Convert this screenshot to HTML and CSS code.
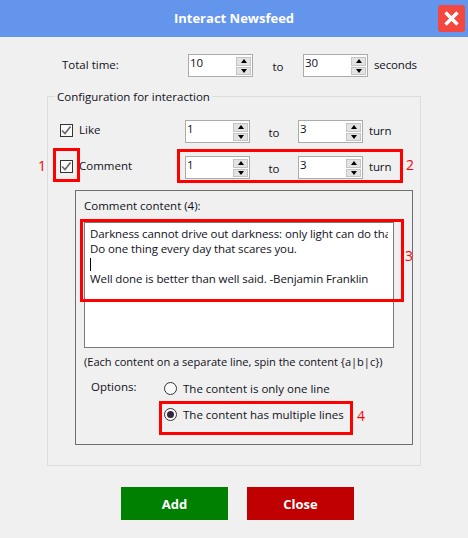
FILE: index.html
```html
<!DOCTYPE html>
<html lang="en">
<head>
<meta charset="utf-8">
<title>Interact Newsfeed</title>
<link rel="stylesheet" href="styles.css">
</head>
<body>
<div class="app">
  <header class="titlebar">
    <h1 class="title">Interact Newsfeed</h1>
    <button class="close-x" aria-label="Close">
      <svg width="17" height="17" viewBox="0 0 17 17"><path d="M2.5 2.5L14.5 14.5M14.5 2.5L2.5 14.5" stroke="#fff" stroke-width="3.4" fill="none"/></svg>
    </button>
  </header>

  <div class="total-row">
    <span class="total-label">Total time:</span>
    <div class="spin"><span class="spin-val">10</span><span class="spin-btns"><i class="up"></i><i class="down"></i></span></div>
    <span class="to to-total">to</span>
    <div class="spin"><span class="spin-val">30</span><span class="spin-btns"><i class="up"></i><i class="down"></i></span></div>
    <span class="unit">seconds</span>
  </div>

  <fieldset class="config">
    <legend class="config-legend">Configuration for interaction</legend>

    <div class="opt-row like-row">
      <span class="check"><svg width="11" height="11" viewBox="0 0 11 11"><path d="M1 5.5L4 8.5L9.5 1.5" stroke="#666" stroke-width="1.6" fill="none"/></svg></span>
      <span class="opt-label">Like</span>
      <div class="spin"><span class="spin-val">1</span><span class="spin-btns"><i class="up"></i><i class="down"></i></span></div>
      <span class="to">to</span>
      <div class="spin"><span class="spin-val">3</span><span class="spin-btns"><i class="up"></i><i class="down"></i></span></div>
      <span class="unit">turn</span>
    </div>

    <div class="opt-row comment-row">
      <span class="check"><svg width="11" height="11" viewBox="0 0 11 11"><path d="M1 5.5L4 8.5L9.5 1.5" stroke="#666" stroke-width="1.6" fill="none"/></svg></span>
      <span class="opt-label">Comment</span>
      <div class="spin"><span class="spin-val">1</span><span class="spin-btns"><i class="up"></i><i class="down"></i></span></div>
      <span class="to">to</span>
      <div class="spin"><span class="spin-val">3</span><span class="spin-btns"><i class="up"></i><i class="down"></i></span></div>
      <span class="unit">turn</span>
    </div>

    <section class="comment-box">
      <div class="comment-title">Comment content (4):</div>
      <div class="editor">
        <div class="line">Darkness cannot drive out darkness: only light can do that; hate cannot drive out hate</div>
        <div class="line">Do one thing every day that scares you.</div>
        <div class="line"><span class="caret"></span></div>
        <div class="line">Well done is better than well said. -Benjamin Franklin</div>
      </div>
      <div class="hint">(Each content on a separate line, spin the content {a|b|c})</div>
      <div class="options">
        <span class="options-label">Options:</span>
        <div class="radios">
          <div class="radio-row"><span class="radio"></span><span>The content is only one line</span></div>
          <div class="radio-row"><span class="radio on"></span><span>The content has multiple lines</span></div>
        </div>
      </div>
    </section>
  </fieldset>

  <footer class="actions">
    <button class="btn btn-add">Add</button>
    <button class="btn btn-close">Close</button>
  </footer>

  <div class="mark mark-1"></div>
  <div class="mark mark-2"></div>
  <div class="mark mark-3"></div>
  <div class="mark mark-4"></div>
  <span class="num num-1">1</span>
  <span class="num num-2">2</span>
  <span class="num num-3">3</span>
  <span class="num num-4">4</span>
</div>
</body>
</html>
```
FILE: styles.css
```css
* { box-sizing: border-box; }
html, body { margin: 0; padding: 0; }
body { width: 468px; height: 538px; overflow: hidden; }

.app {
  position: relative;
  width: 468px;
  height: 538px;
  background: #f0f0f0;
  font-family: "Open Sans", "Noto Sans", sans-serif;
  font-size: 11.5px;
  line-height: 15px;
  color: #10101a;
}

.titlebar {
  position: relative;
  height: 37px;
  background: #6495ed;
  display: flex;
  align-items: center;
  justify-content: center;
}
.title {
  margin: 0;
  font-size: 13px;
  font-weight: 700;
  color: #fff;
}
.close-x {
  position: absolute;
  left: 438px;
  top: 5px;
  width: 27px;
  height: 27px;
  padding: 0;
  border: 0;
  border-radius: 3px;
  background: #f4473f;
  display: flex;
  align-items: center;
  justify-content: center;
}

.total-row {
  display: flex;
  align-items: center;
  height: 23px;
  margin-top: 17px;
  padding-left: 62px;
}
.total-label { width: 126px; position: relative; top: -1px; }

.spin {
  flex: none;
  width: 65px;
  height: 23px;
  background: #fff;
  border: 1px solid #ababab;
  display: flex;
  justify-content: space-between;
  padding: 1px;
}
.spin-val { line-height: 13px; }
.spin-btns {
  width: 15px;
  height: 18px;
  margin-top: 1px;
  display: flex;
  flex-direction: column;
  gap: 1px;
}
.spin-btns i {
  flex: 1;
  background: #e3e3e3;
  border: 1px solid #c4c4c4;
  display: flex;
  align-items: center;
  justify-content: center;
}
.spin-btns i::before {
  content: "";
  width: 0;
  height: 0;
  border-left: 3.5px solid transparent;
  border-right: 3.5px solid transparent;
}
.spin-btns .up::before { border-bottom: 4px solid #000; }
.spin-btns .down::before { border-top: 4px solid #000; }

.to {
  flex: none;
  width: 48px;
  text-align: center;
  position: relative;
  top: 1px;
}
.to-total { width: 50px; }
.unit { margin-left: 6px; position: relative; top: -1px; letter-spacing: -0.15px; }

.config {
  width: 374px;
  height: 377px;
  margin: 12px 0 0 47px;
  padding: 0;
  border: 1px solid #dcdcdc;
  min-width: 0;
}
.config-legend {
  padding: 0 2px;
  margin-left: 7px;
  line-height: 15px;
}

.opt-row {
  display: flex;
  align-items: center;
  height: 23px;
  padding-left: 12px;
}
.like-row { margin-top: 16px; }
.comment-row { margin-top: 13px; }
.check {
  width: 13px;
  height: 13px;
  border: 1px solid #333;
  background: #fafafa;
  display: flex;
  align-items: center;
  justify-content: center;
  flex: none;
  position: relative;
  top: -1px;
}
.opt-label { width: 106px; margin-left: 6px; flex: none; position: relative; top: -2px; }

.comment-box {
  width: 338px;
  height: 255px;
  margin: 11px 0 0 27px;
  border: 1px solid #6e6e6e;
  padding: 7px 18px 0 8px;
}
.comment-title { line-height: 15px; }
.editor {
  height: 126px;
  margin-top: 9px;
  width: 310px;
  background: #fff;
  border: 1px solid #7a7a7a;
  padding: 3px 5px 0 5px;
  overflow: hidden;
}
.line {
  height: 15px;
  white-space: nowrap;
  overflow: hidden;
  letter-spacing: -0.1px;
}
.caret {
  display: inline-block;
  width: 1px;
  height: 13px;
  background: #000;
  margin-top: 2px;
}
.hint { margin-top: 6px; white-space: nowrap; font-size: 11.1px; letter-spacing: -0.03px; }
.options {
  display: flex;
  margin-top: 10px;
  padding-left: 7px;
}
.options-label { width: 73px; }
.radios { display: flex; flex-direction: column; gap: 11px; margin-top: 2px; }
.radio-row { display: flex; align-items: center; gap: 6px; }
.radio {
  width: 13px;
  height: 13px;
  border: 1px solid #333;
  border-radius: 50%;
  background: #fafafa;
  flex: none;
  display: flex;
  align-items: center;
  justify-content: center;
}
.radio.on::before {
  content: "";
  width: 7px;
  height: 7px;
  border-radius: 50%;
  background: #33263a;
}

.actions {
  display: flex;
  gap: 19px;
  margin-top: 21px;
  padding-left: 121px;
}
.btn {
  width: 107px;
  height: 33px;
  border: 0;
  padding: 0;
  font-family: inherit;
  font-size: 13px;
  font-weight: 700;
  color: #fff;
}
.btn-add { background: #008000; }
.btn-close { background: #c00000; }

.mark {
  position: absolute;
  border: 3px solid #f00;
  pointer-events: none;
}
.mark-1 { left: 53px; top: 148px; width: 27px; height: 34px; }
.mark-2 { left: 177px; top: 149px; width: 226px; height: 34px; }
.mark-3 { left: 80px; top: 219px; width: 324px; height: 83px; }
.mark-4 { left: 159px; top: 401px; width: 194px; height: 34px; }

.num {
  position: absolute;
  color: #f00;
  font-size: 14px;
  line-height: 15px;
  font-family: "Open Sans", sans-serif;
}
.num-1 { left: 38px; top: 158px; }
.num-2 { left: 406px; top: 157px; }
.num-3 { left: 405px; top: 248px; }
.num-4 { left: 357px; top: 408px; }
```
